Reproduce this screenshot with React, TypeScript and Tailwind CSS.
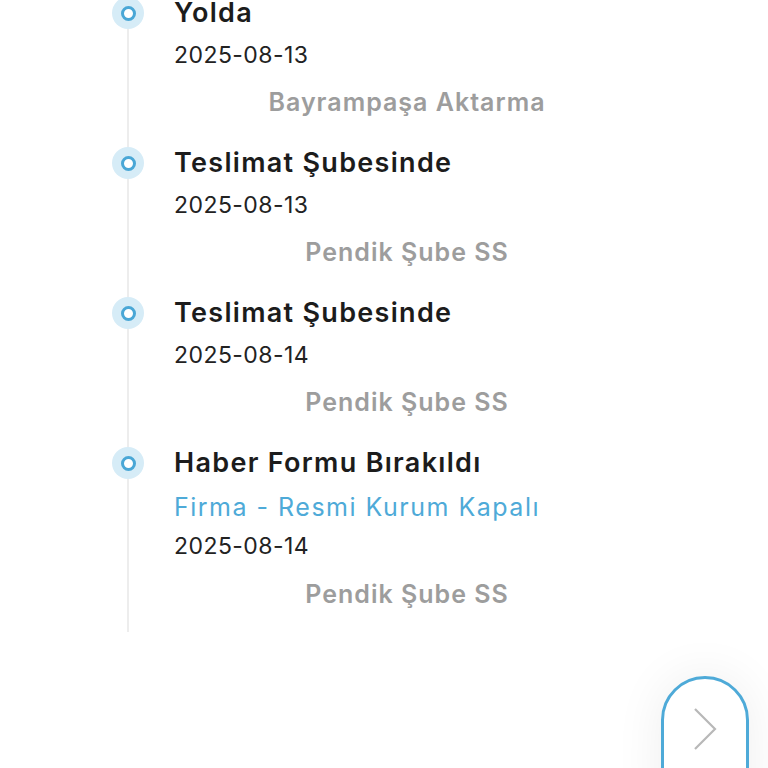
import React from "react";

type Step = {
  title: string;
  note?: string;
  date: string;
  place: string;
};

const steps: Step[] = [
  { title: "Yolda", date: "2025-08-13", place: "Bayrampaşa Aktarma" },
  { title: "Teslimat Şubesinde", date: "2025-08-13", place: "Pendik Şube SS" },
  { title: "Teslimat Şubesinde", date: "2025-08-14", place: "Pendik Şube SS" },
  {
    title: "Haber Formu Bırakıldı",
    note: "Firma - Resmi Kurum Kapalı",
    date: "2025-08-14",
    place: "Pendik Şube SS",
  },
];

const Dot = () => (
  <div className="-ml-[17px] -mt-[3px] flex size-8 shrink-0 items-center justify-center rounded-full bg-[#d6ecf7]">
    <div className="size-[15px] rounded-full border-[3.5px] border-[#4aa7d6] bg-white" />
  </div>
);

const App = () => {
  return (
    <div
      className="relative min-h-[768px] overflow-hidden bg-white"
      style={{ fontFamily: "Inter, 'Noto Sans', sans-serif" }}
    >
      <div className="ml-[127px] flex w-[520px] flex-col gap-[31px] border-l-2 border-[#ededed] pb-[21px]">
        {steps.map((s, i) => (
          <div key={i} className="flex items-start">
            <Dot />
            <div className="ml-[30px] flex w-[466px] flex-col">
              <div className="text-[27px] leading-[26px] font-semibold tracking-[1.3px] text-[#1c1c1c]">
                {s.title}
              </div>
              {s.note && (
                <div className="mt-[14px] text-[25px] leading-[34px] tracking-[1.5px] text-[#4eaad8]">
                  {s.note}
                </div>
              )}
              <div
                className={`${s.note ? "mt-[5px]" : "mt-[12px]"} text-[23px] leading-[34px] tracking-[0.45px] text-[#222]`}
              >
                {s.date}
              </div>
              <div
                className={`${s.note ? "mt-[14px]" : "mt-[13px]"} text-center text-[25px] leading-[34px] font-semibold tracking-[1px] text-[#9d9d9d]`}
              >
                {s.place}
              </div>
            </div>
          </div>
        ))}
      </div>

      <button
        type="button"
        className="absolute left-[661px] top-[676px] flex h-[140px] w-[88px] justify-center rounded-t-full border-[3px] border-[#4eaad8] bg-white pt-[27px] shadow-[0_0_50px_rgba(0,0,0,0.07)]"
      >
        <svg width="26" height="46" viewBox="0 0 26 46" fill="none">
          <path d="M3 3 L23 23 L3 43" stroke="#b8b8b8" strokeWidth="2.2" />
        </svg>
      </button>
    </div>
  );
};

export default App;
